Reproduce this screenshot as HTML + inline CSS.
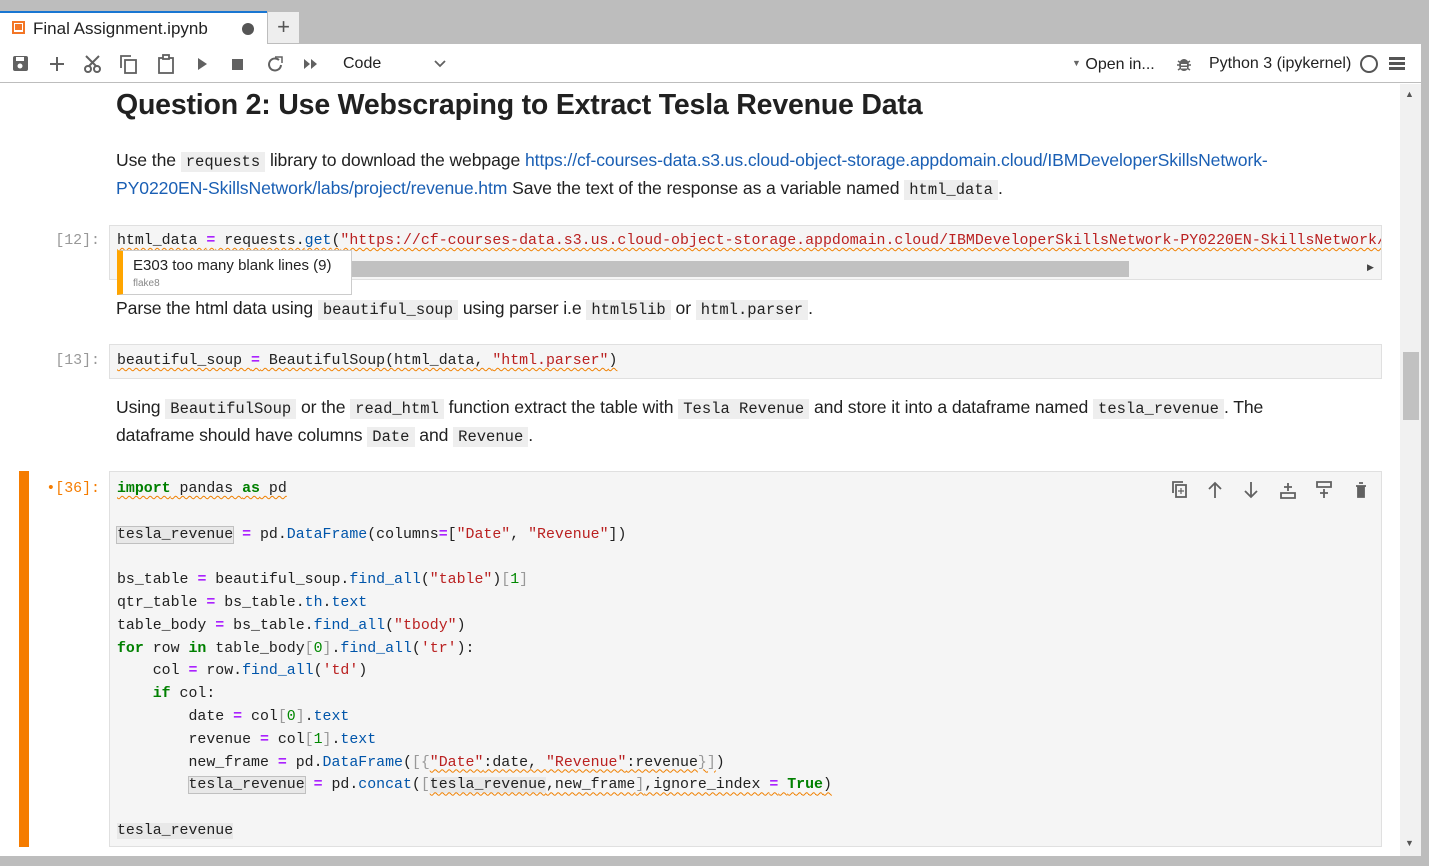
<!DOCTYPE html>
<html><head><meta charset="utf-8"><style>
*{margin:0;padding:0;box-sizing:border-box}
body{width:1429px;height:866px;overflow:hidden;background:#fff;position:relative;font-family:"Liberation Sans",sans-serif;color:#212121}
.a{position:absolute;white-space:nowrap}
.mono{font-family:"Liberation Mono",monospace;font-size:14.9px}
.t{font-size:17.6px;letter-spacing:-0.1px;color:#212121}
.c{font-family:"Liberation Mono",monospace;font-size:15.5px;background:#eee;padding:1px 5px;letter-spacing:0}
a{color:#1a5fb4;text-decoration:none}
.k{color:#008000;font-weight:bold}.o{color:#aa22ff;font-weight:bold}.s{color:#ba2121}.b{color:#0055aa}.n{color:#008800}.g{color:#999}
.cell{position:absolute;left:109px;width:1273px;background:#f5f5f5;border:1px solid #e0e0e0}
.p{position:absolute;left:0;width:100px;text-align:right;font-family:"Liberation Mono",monospace;font-size:14.9px;color:#999}
.w{text-decoration:underline wavy #f08000;text-underline-offset:3px;text-decoration-thickness:1px}
</style></head><body>
<div class="a" style="left:0;top:0;width:1429px;height:44px;background:#bdbdbd"></div>
<div class="a" style="left:0;top:11px;width:267px;height:33px;background:#fff;border-top:2px solid #1976d2"></div>
<div class="a" style="left:12px;top:21px;width:13px;height:13px;border:2px solid #f37626"></div>
<div class="a" style="left:15px;top:24px;width:7px;height:6px;background:#f37626"></div>
<div class="a" style="left:33px;top:19px;font-size:17px;color:#222">Final Assignment.ipynb</div>
<div class="a" style="left:242px;top:23px;width:12px;height:12px;border-radius:50%;background:#555"></div>
<div class="a" style="left:268px;top:12px;width:31px;height:31px;background:#eee;font-size:22px;color:#555;text-align:center;line-height:30px">+</div>
<div class="a" style="left:0;top:44px;width:1421px;height:39px;background:#fff;border-bottom:1px solid #bdbdbd"></div>
<div class="a" style="left:1421px;top:0;width:8px;height:866px;background:#bdbdbd"></div>
<svg class="a" style="left:0;top:44px" width="470" height="40" fill="#616161" stroke="#616161">
<rect x="13" y="12" width="15" height="15" rx="2" stroke="none"/><rect x="16" y="13" width="8" height="4" fill="#fff" stroke="none"/><circle cx="20" cy="22" r="2.5" fill="#fff" stroke="none"/>
<path d="M57 13v14M50 20h14" stroke-width="2" fill="none"/>
<g fill="none" stroke-width="2"><circle cx="88" cy="25" r="3"/><circle cx="97" cy="25" r="3"/><path d="M89 22l10-10M96 22l-10-10"/></g>
<g fill="none" stroke-width="1.8"><rect x="125" y="16" width="11" height="13"/><path d="M121 24V12h10"/></g>
<g fill="none" stroke-width="1.8"><rect x="159" y="14" width="14" height="15"/><rect x="163" y="11" width="6" height="4" fill="#fff"/></g>
<path d="M198 14l9 6-9 6z" stroke="none"/>
<rect x="232" y="15" width="11" height="11" stroke="none"/>
<path d="M279 16a6 6 0 1 0 2 5" fill="none" stroke-width="2"/><path d="M275 13h7v6" fill="none" stroke-width="1.5"/>
<path d="M304 15l6 5-6 5zM311 15l6 5-6 5z" stroke="none"/>
<path d="M435 17l5 5 5-5" fill="none" stroke-width="1.8"/>
</svg>
<div class="a" style="left:343px;top:55px;font-size:16px;color:#222">Code</div>
<div class="a" style="left:1072px;top:56px;font-size:16px;color:#222"><span style="font-size:9px;color:#666;vertical-align:3px">▼</span> Open in...</div>
<svg class="a" style="left:1175px;top:55px" width="18" height="18" fill="#616161"><ellipse cx="9" cy="10" rx="5" ry="6"/><path d="M3 6l3 2M15 6l-3 2M2 10h3M13 10h3M3 15l3-2M15 15l-3-2" stroke="#616161" stroke-width="1.5"/><rect x="6" y="9" width="6" height="1.5" fill="#fff"/><rect x="6" y="12" width="6" height="1.5" fill="#fff"/></svg>
<div class="a" style="left:1209px;top:55px;font-size:16px;color:#222">Python 3 (ipykernel)</div>
<div class="a" style="left:1360px;top:55px;width:18px;height:18px;border:2px solid #555;border-radius:50%"></div>
<svg class="a" style="left:1389px;top:56px" width="16" height="16" fill="#555"><rect y="1" width="16" height="3"/><rect y="6" width="16" height="3"/><rect y="11" width="16" height="3"/></svg>
<div class="a" style="left:1400px;top:84px;width:21px;height:772px;background:#f1f1f1"></div>
<div class="a" style="left:1403px;top:352px;width:16px;height:68px;background:#c1c1c1"></div>
<div class="a" style="left:1405px;top:89px;font-size:9px;color:#555">▲</div>
<div class="a" style="left:1405px;top:838px;font-size:9px;color:#555">▼</div>
<div class="a" style="left:0;top:856px;width:1429px;height:10px;background:#bdbdbd"></div>

<div class="a" style="left:116px;top:89px;font-size:28.5px;font-weight:bold;color:#212121;letter-spacing:-0.2px">Question 2: Use Webscraping to Extract Tesla Revenue Data</div>
<div class="a t" style="left:116px;top:150px">Use the <span class="c">requests</span> library to download the webpage <a>https://cf-courses-data.s3.us.cloud-object-storage.appdomain.cloud/IBMDeveloperSkillsNetwork-</a></div>
<div class="a t" style="left:116px;top:178px"><a>PY0220EN-SkillsNetwork/labs/project/revenue.htm</a> Save the text of the response as a variable named <span class="c">html_data</span>.</div>

<div class="p" style="top:233px">[12]:</div>
<div class="cell" style="top:225px;height:55px;overflow:hidden">
<div class="a mono" style="left:7px;top:7px"><span class="w">html_data <span class="o">=</span> requests.<span class="b">get</span>(<span class="s">"https://cf-courses-data.s3.us.cloud-object-storage.appdomain.cloud/IBMDeveloperSkillsNetwork-PY0220EN-SkillsNetwork/</span></span></div>
<div class="a" style="left:7px;top:35px;width:1012px;height:16px;background:#c1c1c1"></div>
<div class="a" style="left:1257px;top:36px;font-size:9px;color:#444">▶</div>
</div>
<div class="a" style="left:117px;top:250px;width:235px;height:45px;background:#fff;border:1px solid #ccc;border-left:6px solid #ffa500"></div>
<div class="a" style="left:133px;top:257px;font-size:15px;color:#222">E303 too many blank lines (9)</div>
<div class="a" style="left:133px;top:278px;font-size:10px;color:#888">flake8</div>
<div class="a t" style="left:116px;top:298px">Parse the html data using <span class="c">beautiful_soup</span> using parser i.e <span class="c">html5lib</span> or <span class="c">html.parser</span>.</div>

<div class="p" style="top:353px">[13]:</div>
<div class="cell" style="top:344px;height:35px">
<div class="a mono" style="left:7px;top:8px"><span class="w">beautiful_soup <span class="o">=</span> BeautifulSoup(html_data, <span class="s">"html.parser"</span>)</span></div>
</div>

<div class="a t" style="left:116px;top:397px">Using <span class="c">BeautifulSoup</span> or the <span class="c">read_html</span> function extract the table with <span class="c">Tesla Revenue</span> and store it into a dataframe named <span class="c">tesla_revenue</span>. The</div>
<div class="a t" style="left:116px;top:425px">dataframe should have columns <span class="c">Date</span> and <span class="c">Revenue</span>.</div>

<div class="a" style="left:19px;top:471px;width:10px;height:376px;background:#f57c00"></div>
<div class="p" style="top:481px;color:#f57c00">•[36]:</div>
<div class="cell" style="top:471px;height:376px">
<svg class="a" style="left:1060px;top:8px" width="200" height="20" fill="none" stroke="#616161" stroke-width="1.8">
<rect x="6" y="5" width="10" height="12"/><path d="M3 13V2h10"/><path d="M11 8v6M8 11h6" stroke-width="1.2"/>
<path d="M45 18V3M39 9l6-6 6 6"/>
<path d="M81 2v15M75 11l6 6 6-6"/>
<path d="M111 13h14v5h-14zM118 3v8M114 7h8"/>
<path d="M147 2h14v5h-14zM154 9v9M150 13h8"/>
<path d="M186 6h10M188 6v11h6V6M189 3h4" fill="#616161"/>
</svg>
<div class="a mono" style="left:7px;top:6px;line-height:22.8px">
<span class="w"><span class="k">import</span> pandas <span class="k">as</span> pd</span><br><br>
<span style="background:#e8e8e8;outline:1px solid #c0c0c0">tesla_revenue</span> <span class="o">=</span> pd.<span class="b">DataFrame</span>(columns<span class="o">=</span>[<span class="s">"Date"</span>, <span class="s">"Revenue"</span>])<br><br>
bs_table <span class="o">=</span> beautiful_soup.<span class="b">find_all</span>(<span class="s">"table"</span>)<span class="g">[</span><span class="n">1</span><span class="g">]</span><br>
qtr_table <span class="o">=</span> bs_table.<span class="b">th</span>.<span class="b">text</span><br>
table_body <span class="o">=</span> bs_table.<span class="b">find_all</span>(<span class="s">"tbody"</span>)<br>
<span class="k">for</span> row <span class="k">in</span> table_body<span class="g">[</span><span class="n">0</span><span class="g">]</span>.<span class="b">find_all</span>(<span class="s">'tr'</span>):<br>
&nbsp;&nbsp;&nbsp;&nbsp;col <span class="o">=</span> row.<span class="b">find_all</span>(<span class="s">'td'</span>)<br>
&nbsp;&nbsp;&nbsp;&nbsp;<span class="k">if</span> col:<br>
&nbsp;&nbsp;&nbsp;&nbsp;&nbsp;&nbsp;&nbsp;&nbsp;date <span class="o">=</span> col<span class="g">[</span><span class="n">0</span><span class="g">]</span>.<span class="b">text</span><br>
&nbsp;&nbsp;&nbsp;&nbsp;&nbsp;&nbsp;&nbsp;&nbsp;revenue <span class="o">=</span> col<span class="g">[</span><span class="n">1</span><span class="g">]</span>.<span class="b">text</span><br>
&nbsp;&nbsp;&nbsp;&nbsp;&nbsp;&nbsp;&nbsp;&nbsp;new_frame <span class="o">=</span> pd.<span class="b">DataFrame</span>(<span class="g">[{</span><span class="w"><span class="s">"Date"</span>:date, <span class="s">"Revenue"</span>:revenue<span class="g">}]</span></span>)<br>
&nbsp;&nbsp;&nbsp;&nbsp;&nbsp;&nbsp;&nbsp;&nbsp;<span style="background:#e8e8e8;outline:1px solid #c0c0c0">tesla_revenue</span> <span class="o">=</span> pd.<span class="b">concat</span>(<span class="g">[</span><span class="w"><span style="background:#e8e8e8">tesla_revenue</span>,new_frame<span class="g">]</span>,ignore_index <span class="o">=</span> <span class="k">True</span>)</span><br><br>
<span style="background:#e8e8e8">tesla_revenue</span>
</div>
</div>
</body></html>
